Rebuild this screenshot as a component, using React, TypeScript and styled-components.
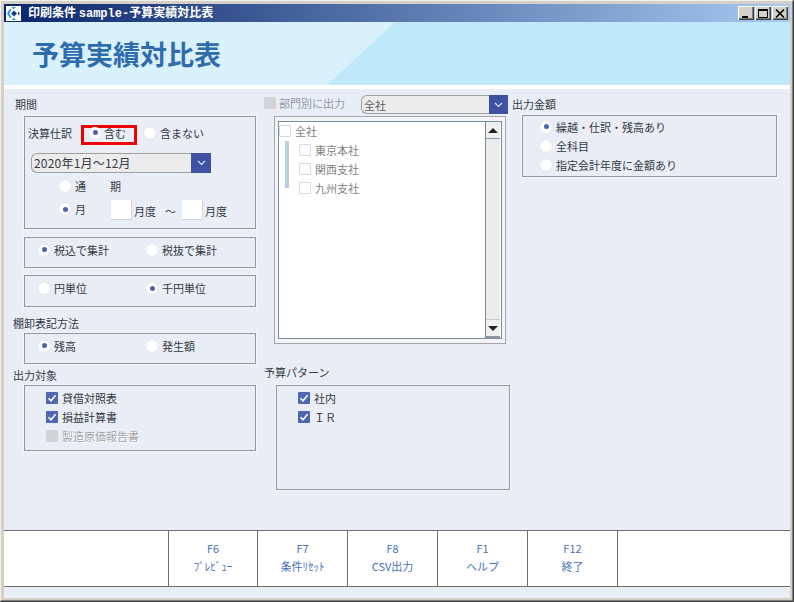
import React from 'react';
import styled, { createGlobalStyle } from 'styled-components';

const GlobalStyle = createGlobalStyle`
  html, body {
    margin: 0;
    padding: 0;
    background: #d4d0c8;
  }
  body {
    font-family: "Noto Sans CJK JP", "Noto Sans", sans-serif;
    font-size: 11px;
    color: #333a44;
  }
`;

const Window = styled.div`
  box-sizing: border-box;
  width: 794px;
  height: 602px;
  display: flex;
  flex-direction: column;
  padding: 4px 3px 3px 4px;
  background: #d4d0c8;
  border-right: 1px solid #404040;
  border-bottom: 1px solid #404040;
  box-shadow: inset 1px 1px 0 #f4f2ec, inset -1px -1px 0 #808080;
`;

const TitleBar = styled.div`
  height: 18px;
  flex: none;
  display: flex;
  align-items: center;
  padding: 0 2px;
  background: linear-gradient(90deg, #0a246a 0%, #a6caf0 100%);
`;

const AppIcon = styled.svg`
  width: 15px;
  height: 15px;
  flex: none;
  margin-right: 7px;
`;

const TitleText = styled.div`
  flex: 1;
  color: #fff;
  font-size: 12px;
  font-weight: 700;
  line-height: 18px;
  white-space: nowrap;

  span {
    font-family: "Liberation Mono", monospace;
    font-size: 12px;
  }
`;

const WindowButton = styled.button`
  box-sizing: border-box;
  width: 16px;
  height: 14px;
  padding: 0;
  margin-left: 1px;
  display: flex;
  align-items: center;
  justify-content: center;
  background: #d4d0c8;
  border: none;
  box-shadow: inset 1px 1px 0 #fff, inset -1px -1px 0 #404040, inset -2px -2px 0 #808080;

  & + & {
    margin-left: 1px;
  }
`;

const Banner = styled.div`
  position: relative;
  height: 63px;
  flex: none;
  display: flex;
  align-items: center;
  padding-left: 28px;
  background: #d8f1fc;
  border-bottom: 4px solid #fff;
  overflow: hidden;

  &::after {
    content: '';
    position: absolute;
    inset: 0;
    background: #bfe9fa;
    clip-path: polygon(391px 0, 100% 0, 100% 100%, 323px 100%);
  }
`;

const BannerTitle = styled.h1`
  position: relative;
  z-index: 1;
  margin: 0;
  font-size: 27px;
  font-weight: 700;
  line-height: 36px;
  color: #2f6cab;
`;

const Content = styled.div`
  flex: 1;
  min-height: 0;
  display: grid;
  grid-template-columns: 244px 246px 265px;
  column-gap: 8px;
  padding: 7px 0 0 8px;
  background: #e9eef6;
`;

const Column = styled.div`
  display: flex;
  flex-direction: column;
`;

const RightColumn = styled(Column)`
  margin-left: -6px;
  margin-right: 6px;
`;

const Label = styled.div<{ $top?: number; $indent?: number }>`
  height: 16px;
  line-height: 16px;
  margin-top: ${({ $top }) => $top ?? 0}px;
  padding-left: ${({ $indent }) => $indent ?? 1}px;
  white-space: nowrap;
`;

const Group = styled.div<{ $top: number; $height: number; $left?: number }>`
  box-sizing: border-box;
  height: ${({ $height }) => $height}px;
  margin-top: ${({ $top }) => $top}px;
  margin-left: ${({ $left }) => $left ?? 12}px;
  border: 1px solid #93969c;
  box-shadow: 0 0 0 1px #f4f6fa;
`;

const PeriodGroup = styled(Group)`
  display: flex;
  flex-direction: column;
`;

const ChoiceRow = styled(Group)`
  display: grid;
  grid-template-columns: 108px 108px;
  align-items: center;
  padding: 0 0 6px 13px;
`;

const StackGroup = styled(Group)`
  display: flex;
  flex-direction: column;
  padding: 2px 0 0 21px;
`;

const RadioStack = styled(Group)`
  display: flex;
  flex-direction: column;
  padding: 1px 0 0 17px;
`;

const ItemRow = styled.div`
  height: 19px;
  display: flex;
  align-items: center;
  white-space: nowrap;
`;

const Radio = styled.span<{ $on?: boolean }>`
  box-sizing: border-box;
  width: 12px;
  height: 12px;
  flex: none;
  margin-right: 4px;
  display: flex;
  align-items: center;
  justify-content: center;
  border-radius: 50%;
  background: #fff;
  box-shadow: 0 0 1px #c4c8d0;

  &::after {
    content: '';
    display: ${({ $on }) => ($on ? 'block' : 'none')};
    width: 5px;
    height: 5px;
    border-radius: 50%;
    background: #4f61ae;
  }
`;

const RadioItem = styled.label`
  display: flex;
  align-items: center;
  white-space: nowrap;
`;

const Check = styled.span<{ $state: 'on' | 'off' | 'disabled' }>`
  box-sizing: border-box;
  width: 12px;
  height: 12px;
  flex: none;
  margin-right: 4px;
  display: flex;
  align-items: center;
  justify-content: center;
  border-radius: 1px;
  background: ${({ $state }) =>
    $state === 'on' ? '#4f66b0' : $state === 'disabled' ? '#d2d3d6' : '#fff'};
  border: ${({ $state }) => ($state === 'off' ? '1px solid #d8dadd' : 'none')};
`;

const CheckMark = styled.svg`
  width: 10px;
  height: 10px;
`;

const MutedText = styled.span`
  color: #a2a4a8;
  text-shadow: 1px 1px 0 #fff;
`;

const JournalRow = styled.div`
  box-sizing: border-box;
  display: flex;
  align-items: center;
  margin: 8px 0 0 3px;
  height: 20px;
  padding-bottom: 5px;
`;

const JournalLabel = styled.span`
  width: 53px;
  flex: none;
`;

const Highlight = styled.div`
  box-sizing: border-box;
  width: 56px;
  height: 20px;
  margin-right: 7px;
  align-self: flex-start;
  display: flex;
  align-items: center;
  padding: 0 0 5px 5px;
  border: 3px solid #f00000;

  & > label > span {
    margin-right: 3px;
  }
`;

const Select = styled.div<{ $width: number; $left?: number; $height: number }>`
  box-sizing: border-box;
  width: ${({ $width }) => $width}px;
  height: ${({ $height }) => $height}px;
  margin-left: ${({ $left }) => $left ?? 0}px;
  display: flex;
  flex: none;
`;

const SelectValue = styled.div`
  box-sizing: border-box;
  flex: 1;
  display: flex;
  align-items: center;
  padding-left: 2px;
  color: #5c6068;
  background: #ececec;
  border: 1px solid #a0a0a0;
  border-right: none;
  border-radius: 6px 0 0 6px;
  white-space: nowrap;
`;

const PeriodValue = styled(SelectValue)`
  color: #333a44;
  font-size: 12px;
  letter-spacing: 0.2px;
  padding-bottom: 2px;
`;

const SelectButton = styled.div`
  width: 19px;
  flex: none;
  display: flex;
  align-items: center;
  justify-content: center;
  background: #3f51a3;
`;

const PeriodSelect = styled(Select)`
  margin-top: 8px;

  ${SelectButton} {
    width: 20px;
  }
`;

const PeriodRow = styled.div`
  display: grid;
  grid-template-columns: 43px auto;
  align-items: center;
  margin-left: 34px;
  white-space: nowrap;
`;

const FirstPeriodRow = styled(PeriodRow)`
  height: 21px;
  margin-top: 2px;
  grid-template-columns: 27px 16px 11px;
  column-gap: 8px;

  & > *:nth-child(1) { grid-column: 1 / 3; }
  & > *:nth-child(2) { grid-column: 3; margin-left: -8px; }
`;

const MonthRow = styled(PeriodRow)`
  height: 24px;
  margin-top: 1px;
`;

const MonthRange = styled.div`
  display: flex;
  align-items: center;
  margin-top: 3px;
  margin-left: 9px;
`;

const MonthInput = styled.span`
  box-sizing: border-box;
  width: 21px;
  height: 20px;
  margin-top: -1px;
  background: #fff;
  border-right: 1px solid #d4d6da;
  border-bottom: 1px solid #d4d6da;
`;

const MonthUnit = styled.span`
  margin: 0 0 0 2px;
`;

const Tilde = styled.span`
  margin: 0 6px 0 9px;
`;

const DeptHeader = styled.div`
  display: flex;
  align-items: center;
  height: 19px;
  margin-top: -1px;
`;

const DeptLabel = styled.span`
  color: #8b98a8;
  margin-left: -1px;
  margin-top: -3px;
  width: 82px;
  flex: none;
  white-space: nowrap;
`;

const DeptCheck = styled(Check)`
  margin-top: -4px;
`;

const TreeFrame = styled.div`
  box-sizing: border-box;
  width: 232px;
  height: 228px;
  margin: 2px 0 0 10px;
  padding: 4px 3px 4px 3px;
  border: 1px solid #a4a8ae;
  background: #f2f4f8;
`;

const TreeBox = styled.div`
  box-sizing: border-box;
  height: 100%;
  display: flex;
  border: 1px solid #7d8ca0;
  background: #fff;
`;

const TreeList = styled.div`
  position: relative;
  flex: 1;
  margin-top: -1px;
`;

const TreeRow = styled.div<{ $child?: boolean }>`
  height: 19px;
  display: flex;
  align-items: center;
  padding-left: ${({ $child }) => ($child ? 20 : 0)}px;
  color: #7f7f7f;
`;

const TreeGuide = styled.div`
  position: absolute;
  left: 6px;
  top: 20px;
  width: 4px;
  height: 47px;
  background: #b8cfe6;
`;

const Scrollbar = styled.div`
  width: 14px;
  flex: none;
  display: flex;
  flex-direction: column;
  justify-content: space-between;
  background: #ececec;
  border-left: 1px solid #7d8ca0;
  margin-right: 1px;
`;

const ScrollButton = styled.div<{ $down?: boolean }>`
  height: 16px;
  display: flex;
  align-items: center;
  justify-content: center;
  background: #f0f0f0;
  border-bottom: ${({ $down }) => ($down ? '2px solid #8a97a8' : '1px solid #8a97a8')};
  border-top: ${({ $down }) => ($down ? '1px solid #c8ccd2' : 'none')};

  &::after {
    content: '';
    width: 0;
    height: 0;
    border-left: 5px solid transparent;
    border-right: 5px solid transparent;
    ${({ $down }) => ($down ? 'border-top: 5px solid #222;' : 'border-bottom: 5px solid #222;')}
  }
`;

const Footer = styled.div`
  height: 55px;
  flex: none;
  display: grid;
  grid-template-columns: 164px 89px 90px 90px 90px 90px 1fr;
  background: #fff;
  border-top: 1px solid #6e6e6e;
  border-bottom: 1px solid #6e6e6e;
`;

const FooterCell = styled.div`
  display: flex;
  flex-direction: column;
  align-items: center;
  justify-content: center;
  gap: 1px;
  padding-bottom: 3px;
  color: #4a72b4;
  line-height: 17px;
  white-space: nowrap;
  border-left: 1px solid #6e6e6e;

  &:first-child {
    border-left: none;
  }
`;

const FooterPad = styled.div`
  height: 11px;
  flex: none;
  background: #e9eef6;
`;

const Tick = () => (
  <CheckMark viewBox="0 0 10 10">
    <path d="M1.5 5.2 L4 7.8 L8.6 2.2" fill="none" stroke="#fff" strokeWidth="1.5" />
  </CheckMark>
);

const Chevron = () => (
  <svg width="9" height="6" viewBox="0 0 9 6">
    <path d="M1 1 L4.5 4.5 L8 1" fill="none" stroke="#dfe4f4" strokeWidth="1.2" />
  </svg>
);

const RadioOption = ({ label, on }: { label: string; on?: boolean }) => (
  <RadioItem>
    <Radio $on={on} />
    {label}
  </RadioItem>
);

const FUNCTION_KEYS = [
  ['F6', 'ﾌﾟﾚﾋﾞｭｰ'],
  ['F7', '条件ﾘｾｯﾄ'],
  ['F8', 'CSV出力'],
  ['F1', 'ヘルプ'],
  ['F12', '終了'],
];

export default function App() {
  return (
    <>
      <GlobalStyle />
      <Window>
        <TitleBar>
          <AppIcon viewBox="0 0 15 15">
            <rect width="15" height="15" fill="#fff" />
            <path d="M8 4.5 L11 7.5 L8 10.5 L5 7.5 Z" fill="#123f8c" />
            <path d="M5.5 1 H10 L7.8 3.2 Z M5.5 14 H10 L7.8 11.8 Z" fill="#1e9be0" />
            <path d="M4.2 2.6 L1 7.5 L4.2 12.4 L5.4 11 L3.3 7.5 L5.4 4 Z" fill="#1e9be0" />
            <path d="M12 5.5 L14 7.5 L12 9.5 Z" fill="#123f8c" />
          </AppIcon>
          <TitleText>
            印刷条件 <span>sample-</span>予算実績対比表
          </TitleText>
          <WindowButton aria-label="最小化">
            <svg width="10" height="9" viewBox="0 0 10 9">
              <rect x="1" y="7" width="6" height="2" fill="#000" />
            </svg>
          </WindowButton>
          <WindowButton aria-label="最大化">
            <svg width="10" height="9" viewBox="0 0 10 9">
              <path d="M0.5 1.5 H9.5 V8.5 H0.5 Z" fill="none" stroke="#000" />
              <rect x="0" y="0" width="10" height="2" fill="#000" />
            </svg>
          </WindowButton>
          <WindowButton aria-label="閉じる">
            <svg width="10" height="9" viewBox="0 0 10 9">
              <path d="M1 0.5 L9 8.5 M9 0.5 L1 8.5" stroke="#000" strokeWidth="1.6" />
            </svg>
          </WindowButton>
        </TitleBar>

        <Banner>
          <BannerTitle>予算実績対比表</BannerTitle>
        </Banner>

        <Content>
          <Column>
            <Label $indent={3}>期間</Label>
            <PeriodGroup $top={4} $height={113}>
              <JournalRow>
                <JournalLabel>決算仕訳</JournalLabel>
                <Highlight>
                  <RadioOption label="含む" on />
                </Highlight>
                <RadioOption label="含まない" />
              </JournalRow>
              <PeriodSelect $width={180} $left={6} $height={20}>
                <PeriodValue>2020年1月～12月</PeriodValue>
                <SelectButton>
                  <Chevron />
                </SelectButton>
              </PeriodSelect>
              <FirstPeriodRow>
                <RadioOption label="通" />
                <span>期</span>
              </FirstPeriodRow>
              <MonthRow>
                <RadioOption label="月" on />
                <MonthRange>
                  <MonthInput />
                  <MonthUnit>月度</MonthUnit>
                  <Tilde>～</Tilde>
                  <MonthInput />
                  <MonthUnit>月度</MonthUnit>
                </MonthRange>
              </MonthRow>
            </PeriodGroup>

            <ChoiceRow $top={8} $height={31}>
              <RadioOption label="税込で集計" on />
              <RadioOption label="税抜で集計" />
            </ChoiceRow>
            <ChoiceRow $top={7} $height={32}>
              <RadioOption label="円単位" />
              <RadioOption label="千円単位" on />
            </ChoiceRow>

            <Label $top={8}>棚卸表記方法</Label>
            <ChoiceRow $top={2} $height={31}>
              <RadioOption label="残高" on />
              <RadioOption label="発生額" />
            </ChoiceRow>

            <Label $top={3}>出力対象</Label>
            <StackGroup $top={2} $height={66}>
              <ItemRow>
                <Check $state="on"><Tick /></Check>
                貸借対照表
              </ItemRow>
              <ItemRow>
                <Check $state="on"><Tick /></Check>
                損益計算書
              </ItemRow>
              <ItemRow>
                <Check $state="disabled" />
                <MutedText>製造原価報告書</MutedText>
              </ItemRow>
            </StackGroup>
          </Column>

          <Column>
            <DeptHeader>
              <DeptCheck $state="disabled" />
              <DeptLabel>部門別に出力</DeptLabel>
              <Select $width={147} $height={19}>
                <SelectValue>全社</SelectValue>
                <SelectButton>
                  <Chevron />
                </SelectButton>
              </Select>
            </DeptHeader>
            <TreeFrame>
              <TreeBox>
                <TreeList>
                  <TreeRow>
                    <Check $state="off" />
                    全社
                  </TreeRow>
                  <TreeGuide />
                  <TreeRow $child>
                    <Check $state="off" />
                    東京本社
                  </TreeRow>
                  <TreeRow $child>
                    <Check $state="off" />
                    関西支社
                  </TreeRow>
                  <TreeRow $child>
                    <Check $state="off" />
                    九州支社
                  </TreeRow>
                </TreeList>
                <Scrollbar>
                  <ScrollButton />
                  <ScrollButton $down />
                </Scrollbar>
              </TreeBox>
            </TreeFrame>

            <Label $top={20} $indent={0}>予算パターン</Label>
            <StackGroup $top={5} $height={105}>
              <ItemRow>
                <Check $state="on"><Tick /></Check>
                社内
              </ItemRow>
              <ItemRow>
                <Check $state="on"><Tick /></Check>
                ＩＲ
              </ItemRow>
            </StackGroup>
          </Column>

          <RightColumn>
            <Label $indent={0}>出力金額</Label>
            <RadioStack $top={3} $left={10} $height={62}>
              <ItemRow><RadioOption label="繰越・仕訳・残高あり" on /></ItemRow>
              <ItemRow><RadioOption label="全科目" /></ItemRow>
              <ItemRow><RadioOption label="指定会計年度に金額あり" /></ItemRow>
            </RadioStack>
          </RightColumn>
        </Content>

        <Footer>
          <FooterCell />
          {FUNCTION_KEYS.map(([key, name]) => (
            <FooterCell key={key}>
              <span>{key}</span>
              <span>{name}</span>
            </FooterCell>
          ))}
          <FooterCell />
        </Footer>
        <FooterPad />
      </Window>
    </>
  );
}
